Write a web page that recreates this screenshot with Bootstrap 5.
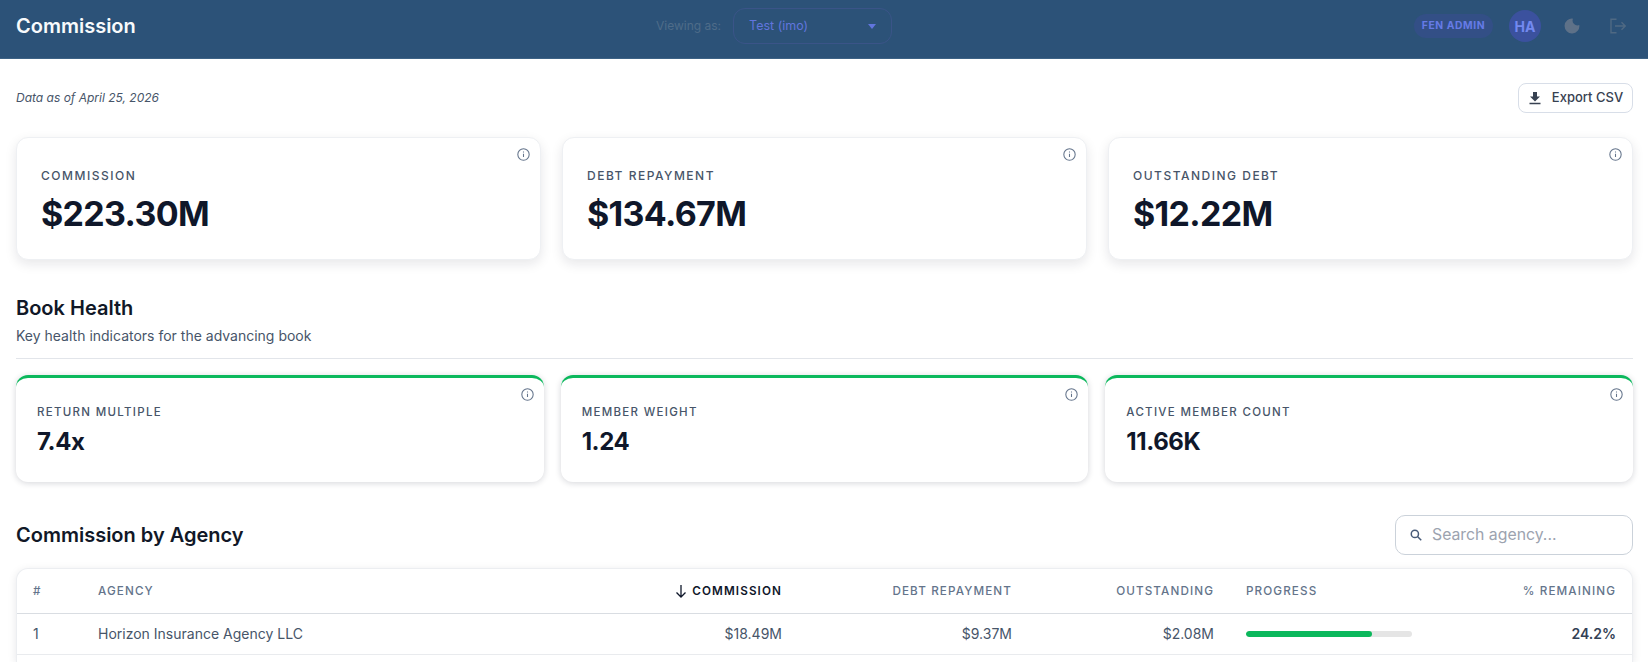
<!DOCTYPE html>
<html>

<head>
  <meta charset="utf-8">
  <meta name="viewport" content="width=device-width">
  <title>Commission</title>
  <link href="https://cdn.jsdelivr.net/npm/bootstrap@5.3.2/dist/css/bootstrap.min.css" rel="stylesheet" type="text/css" />
  <style>
    html, body { height: 662px; overflow: hidden; }
    body { font-family: Inter, "Liberation Sans", sans-serif; background: #fff; color: #0f172a; }
    .top-bar { height: 59px; background: #2c5278; border-bottom: 1px solid #3d6285; padding: 8px 22px 14px 16px; }
    .top-title { width: 640px; font-size: 20px; font-weight: 600; color: #f8fafc; line-height: 36px; }
    .view-label { font-size: 12px; color: #4e6c89; margin-right: 12px; }
    .view-select { width: 159px; height: 36px; border: 1px solid #3a5488; border-radius: 12px; padding: 0 15px; font-size: 12.5px; color: #6175dd; }
    .caret-down { width: 0; height: 0; border-left: 4.5px solid transparent; border-right: 4.5px solid transparent; border-top: 5px solid #6175dd; }
    .role-pill { width: 79px; height: 24px; border-radius: 12px; background: #334f86; color: #667be6; font-size: 10.3px; font-weight: 700; letter-spacing: .6px; }
    .avatar-dot { width: 32px; height: 32px; border-radius: 50%; background: #3b519e; color: #7389f0; font-size: 14px; font-weight: 700; margin-left: 16px; margin-right: 23px; }
    .moon-icon { width: 16px; height: 16px; display: block; color: #5e7188; }
    .exit-icon { width: 16px; height: 16px; display: block; color: #4f6983; margin-left: 30px; }
    .meta-row { height: 78px; padding: 24px 0 24px; }
    .as-of { font-size: 12px; font-style: italic; color: #475569; }
    .export-btn { width: 115px; height: 30px; padding: 0; border: 1px solid #d8dee8; border-radius: 8px; background: #fff; font-size: 13px; font-weight: 500; color: #374151; gap: 10px; }
    .stat-row { gap: 21px; }
    .stat-box { flex: 1 1 0; position: relative; height: 123px; background: #fff; border-radius: 12px; border: 1px solid #eef0f3; box-shadow: 0 4px 12px rgba(15,23,42,.1); padding: 29px 24px; }
    .stat-label { font-size: 12px; font-weight: 500; letter-spacing: 1.5px; color: #475569; line-height: 18px; }
    .stat-value { font-size: 34px; font-weight: 700; line-height: 44px; margin-top: 7px; color: #0f172a; letter-spacing: -.68px; }
    .info-mark { position: absolute; top: 10px; right: 10px; width: 13px; height: 13px; color: #64748b; }
    .sect-title { font-size: 20px; font-weight: 600; line-height: 26px; color: #111827; }
    .sect-sub { font-size: 14px; color: #475569; line-height: 20px; margin-top: 5px; }
    .sect-rule { border-top: 1px solid #e2e5ea; margin-top: 12px; margin-bottom: 16px; }
    .health-row { gap: 17px; }
    .health-box { flex: 1 1 0; position: relative; height: 107px; background: #fff; border-radius: 12px; border-top: 3px solid #0bb85c; box-shadow: 0 1px 6px rgba(15,23,42,.18); padding: 26px 21px; }
    .health-label { font-size: 11.5px; font-weight: 500; letter-spacing: 1.3px; color: #475569; line-height: 16px; }
    .health-value { font-size: 24px; font-weight: 700; line-height: 32px; margin-top: 6px; color: #0f172a; letter-spacing: -.4px; }
    .agency-head { margin-top: 32px; height: 41px; }
    .agency-head .sect-title { margin-top: 1px; }
    .search-box { width: 238px; height: 40px; border: 1px solid #cbd2da; border-radius: 10px; padding: 0 14px; gap: 10px; }
    .search-box span { font-size: 15.8px; color: #9ca3af; }
    .search-box svg { width: 12px; height: 12px; color: #475a78; }
    .agency-card { height: 94px; margin-top: 13px; background: #fff; border: 1px solid #eceef1; border-bottom: 0; border-radius: 12px 12px 0 0; box-shadow: 0 2px 8px rgba(15,23,42,.1); overflow: hidden; }
    .agency-table { margin: 0; table-layout: fixed; width: 100%; }
    .agency-table th, .agency-table td { padding: 0 16px; vertical-align: middle; border-bottom-color: #e9ebee; }
    .agency-table th { height: 44px; padding-top: 2px; font-size: 11.7px; font-weight: 500; letter-spacing: 1.1px; color: #64748b; border-bottom: 1px solid #d9dde2; }
    .agency-table th.sorted { color: #0f172a; font-weight: 600; }
    .agency-table td { height: 41px; font-size: 14px; color: #475569; }
    .agency-table td.pct { color: #334155; font-weight: 600; }
    .down-arrow { width: 14px; height: 14px; margin-right: 4px; vertical-align: -3px; }
    .bar-track { width: 166px; height: 6px; background: #e5e5e5; border-radius: 3px; overflow: hidden; }
    .bar-fill { height: 100%; background: #0bb85c; border-radius: 3px; }
  </style>
</head>

<body>
  <div class="top-bar d-flex align-items-center">
    <div class="top-title">Commission</div>
    <div class="d-flex align-items-center">
      <span class="view-label">Viewing as:</span>
      <div class="view-select d-flex align-items-center justify-content-between">
        <span>Test (imo)</span>
        <span class="caret-down"></span>
      </div>
    </div>
    <div class="ms-auto d-flex align-items-center">
      <span class="role-pill d-flex align-items-center justify-content-center">FEN ADMIN</span>
      <span class="avatar-dot d-flex align-items-center justify-content-center">HA</span>
      <svg class="moon-icon" viewBox="0 0 16 16" fill="currentColor"><path d="M9 .7A7.4 7.4 0 1 0 15.3 7 4.8 4.8 0 0 1 9 .7z"/></svg>
      <svg class="exit-icon" viewBox="0 0 16 16" fill="none" stroke="currentColor" stroke-width="1.4"><path d="M6.5 1.2H1v13.6h5.5M5 8h10.2M11.5 4.3 15.2 8l-3.7 3.7"/></svg>
    </div>
  </div>

  <div style="padding:0 15px 0 16px">
    <div class="meta-row d-flex align-items-center justify-content-between">
      <span class="as-of">Data as of April 25, 2026</span>
      <button class="export-btn d-flex align-items-center justify-content-center">
        <svg width="14" height="14" viewBox="0 0 14 14" fill="currentColor"><path d="M5 1h4v4.5h3L7 10.5 2 5.5h3zM1.5 11.8h11v1.4h-11z"/></svg>
        Export CSV
      </button>
    </div>

    <div class="stat-row d-flex">
      <div class="stat-box">
        <svg class="info-mark" viewBox="0 0 16 16" fill="none" stroke="currentColor" stroke-width="1.3"><circle cx="8" cy="8" r="7"/><path d="M8 7.2v4M8 4.4v1.2"/></svg>
        <div class="stat-label">COMMISSION</div>
        <div class="stat-value">$223.30M</div>
      </div>
      <div class="stat-box">
        <svg class="info-mark" viewBox="0 0 16 16" fill="none" stroke="currentColor" stroke-width="1.3"><circle cx="8" cy="8" r="7"/><path d="M8 7.2v4M8 4.4v1.2"/></svg>
        <div class="stat-label">DEBT REPAYMENT</div>
        <div class="stat-value">$134.67M</div>
      </div>
      <div class="stat-box">
        <svg class="info-mark" viewBox="0 0 16 16" fill="none" stroke="currentColor" stroke-width="1.3"><circle cx="8" cy="8" r="7"/><path d="M8 7.2v4M8 4.4v1.2"/></svg>
        <div class="stat-label">OUTSTANDING DEBT</div>
        <div class="stat-value">$12.22M</div>
      </div>
    </div>

    <div class="sect-title" style="margin-top:35px">Book Health</div>
    <div class="sect-sub">Key health indicators for the advancing book</div>
    <div class="sect-rule"></div>

    <div class="health-row d-flex">
      <div class="health-box">
        <svg class="info-mark" viewBox="0 0 16 16" fill="none" stroke="currentColor" stroke-width="1.3"><circle cx="8" cy="8" r="7"/><path d="M8 7.2v4M8 4.4v1.2"/></svg>
        <div class="health-label">RETURN MULTIPLE</div>
        <div class="health-value">7.4x</div>
      </div>
      <div class="health-box">
        <svg class="info-mark" viewBox="0 0 16 16" fill="none" stroke="currentColor" stroke-width="1.3"><circle cx="8" cy="8" r="7"/><path d="M8 7.2v4M8 4.4v1.2"/></svg>
        <div class="health-label">MEMBER WEIGHT</div>
        <div class="health-value">1.24</div>
      </div>
      <div class="health-box">
        <svg class="info-mark" viewBox="0 0 16 16" fill="none" stroke="currentColor" stroke-width="1.3"><circle cx="8" cy="8" r="7"/><path d="M8 7.2v4M8 4.4v1.2"/></svg>
        <div class="health-label">ACTIVE MEMBER COUNT</div>
        <div class="health-value">11.66K</div>
      </div>
    </div>

    <div class="agency-head d-flex align-items-center justify-content-between">
      <div class="sect-title">Commission by Agency</div>
      <div class="search-box d-flex align-items-center">
        <svg viewBox="0 0 16 16" fill="none" stroke="currentColor" stroke-width="2"><circle cx="6.5" cy="6.5" r="4.8"/><path d="M10 10l5 5"/></svg>
        <span>Search agency...</span>
      </div>
    </div>

    <div class="agency-card">
      <table class="table agency-table">
        <colgroup>
          <col style="width:65px"><col><col style="width:200px"><col style="width:230px"><col style="width:202px"><col style="width:200px"><col style="width:202px">
        </colgroup>
        <thead>
          <tr>
            <th>#</th>
            <th>AGENCY</th>
            <th class="text-end sorted"><svg class="down-arrow" viewBox="0 0 14 14" fill="none" stroke="currentColor" stroke-width="1.3"><path d="M7 1v12M2.5 8.5 7 13l4.5-4.5"/></svg>COMMISSION</th>
            <th class="text-end">DEBT REPAYMENT</th>
            <th class="text-end">OUTSTANDING</th>
            <th>PROGRESS</th>
            <th class="text-end">% REMAINING</th>
          </tr>
        </thead>
        <tbody>
          <tr>
            <td>1</td>
            <td>Horizon Insurance Agency LLC</td>
            <td class="text-end">$18.49M</td>
            <td class="text-end">$9.37M</td>
            <td class="text-end">$2.08M</td>
            <td><div class="bar-track"><div class="bar-fill" style="width:76%"></div></div></td>
            <td class="text-end pct">24.2%</td>
          </tr>
        </tbody>
      </table>
    </div>
  </div>
</body>

</html>
